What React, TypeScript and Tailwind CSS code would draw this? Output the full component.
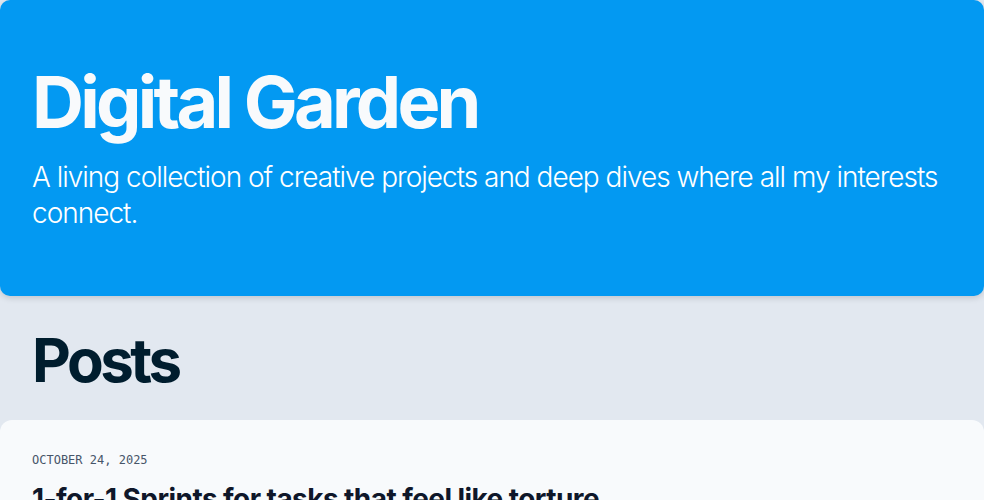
import React from "react";

export default function App() {
  return (
    <div className="min-h-screen bg-[#e2e8f0] font-['Inter',sans-serif]">
      <header className="rounded-[10px] bg-[#0399f2] px-8 pt-[66px] pb-[65px] text-white shadow-[0_2px_6px_rgba(0,0,0,0.15)]">
        <h1 className="text-[72px] font-bold leading-none tracking-[-0.052em] text-[#f8fafc]">Digital Garden</h1>
        <p className="mt-[21px] text-[28px] font-light leading-9 tracking-[-0.036em]">
          A living collection of creative projects and deep dives where all my interests connect.
        </p>
      </header>
      <main>
        <h2 className="px-8 pt-[34px] pb-[30px] text-[60px] font-bold leading-[60px] tracking-[-0.058em] text-[#001d2e]">Posts</h2>
        <article className="rounded-[12px] bg-[#f8fafc] px-8 pt-[32px] pb-8">
          <div className="font-['DejaVu_Sans_Mono',monospace] text-[12px] leading-4 text-[#475569]">OCTOBER 24, 2025</div>
          <h3 className="mt-[13px] text-[28px] font-bold leading-9 tracking-[-0.02em] text-[#0f172a]">
            1-for-1 Sprints for tasks that feel like torture
          </h3>
        </article>
      </main>
    </div>
  );
}
